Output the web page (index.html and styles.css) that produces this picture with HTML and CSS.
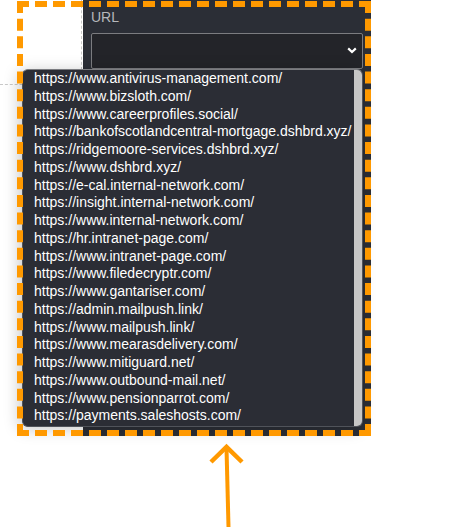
FILE: index.html
```html
<!DOCTYPE html>
<html lang="en">
<head>
<meta charset="utf-8">
<title>URL select</title>
<link rel="stylesheet" href="styles.css">
</head>
<body>
<div class="page">
  <div class="left">
    <div class="left-top"></div>
  </div>
  <div class="panel">
    <div class="label">URL</div>
    <div class="select">
      <svg class="chev" width="10" height="7" viewBox="0 0 10 7"><polyline points="1.2,1.4 5,5 8.8,1.4" fill="none" stroke="#ffffff" stroke-width="2.2"/></svg>
    </div>
  </div>
</div>

<div class="dropdown">
  <ul class="options">
    <li>https://www.antivirus-management.com/</li>
    <li>https://www.bizsloth.com/</li>
    <li>https://www.careerprofiles.social/</li>
    <li>https://bankofscotlandcentral-mortgage.dshbrd.xyz/</li>
    <li>https://ridgemoore-services.dshbrd.xyz/</li>
    <li>https://www.dshbrd.xyz/</li>
    <li>https://e-cal.internal-network.com/</li>
    <li>https://insight.internal-network.com/</li>
    <li>https://www.internal-network.com/</li>
    <li>https://hr.intranet-page.com/</li>
    <li>https://www.intranet-page.com/</li>
    <li>https://www.filedecryptr.com/</li>
    <li>https://www.gantariser.com/</li>
    <li>https://admin.mailpush.link/</li>
    <li>https://www.mailpush.link/</li>
    <li>https://www.mearasdelivery.com/</li>
    <li>https://www.mitiguard.net/</li>
    <li>https://www.outbound-mail.net/</li>
    <li>https://www.pensionparrot.com/</li>
    <li>https://payments.saleshosts.com/</li>
  </ul>
  <div class="scrollbar"></div>
</div>

<div class="highlight"></div>

<svg class="arrow" width="471" height="532" viewBox="0 0 471 532">
  <line x1="228.5" y1="527" x2="226.5" y2="448" stroke="#ff9900" stroke-width="4"/>
  <polyline points="211,462 226.5,447 242,462" fill="none" stroke="#ff9900" stroke-width="4.5"/>
</svg>
</body>
</html>
```

FILE: styles.css
```css
html, body {
  margin: 0;
  padding: 0;
  background: #ffffff;
  width: 471px;
  height: 532px;
  overflow: hidden;
  font-family: "Liberation Sans", Arial, sans-serif;
}

body {
  position: relative;
}

.page {
  display: flex;
  gap: 1px;
  height: 436px;
}

.left {
  width: 81px;
  border-right: 1px dashed #c8c8c8;
  height: 70px;
}

.left-top {
  height: 84px;
  border-bottom: 1px dashed #c8c8c8;
}

.panel {
  width: 288px;
  background: #2b2e36;
  padding: 9px 8px 0 8px;
  box-sizing: border-box;
}

.label {
  font-size: 14px;
  line-height: 17px;
  color: #b6b8bc;
  margin-bottom: 7px;
}

.select {
  height: 36px;
  background: #232429;
  border: 1px solid #7b7c80;
  border-radius: 2px;
  box-sizing: border-box;
  display: flex;
  align-items: center;
  justify-content: flex-end;
  padding-right: 5px;
}

.chev {
  display: block;
  margin-top: -1px;
}

.dropdown {
  position: absolute;
  left: 22px;
  top: 69px;
  width: 341px;
  height: 358px;
  box-sizing: border-box;
  background: #2b2d35;
  border: 1px solid #50535a;
  border-top-color: #7b7c80;
  border-radius: 6px;
  overflow: hidden;
  box-shadow: -3px 2px 16px rgba(0, 0, 0, 0.22);
  display: flex;
}

.options {
  list-style: none;
  margin: 0;
  padding: 0 0 0 11px;
  flex: 1;
  font-size: 14px;
  line-height: 17.75px;
  color: #ffffff;
  white-space: nowrap;
}

.scrollbar {
  width: 8px;
  background: #c6c6c6;
}

.highlight {
  position: absolute;
  left: 17px;
  top: 1px;
  width: 354px;
  height: 435px;
  box-sizing: border-box;
  border: 6px dashed #ff9900;
  pointer-events: none;
}

.arrow {
  position: absolute;
  left: 0;
  top: 0;
  pointer-events: none;
}
```
